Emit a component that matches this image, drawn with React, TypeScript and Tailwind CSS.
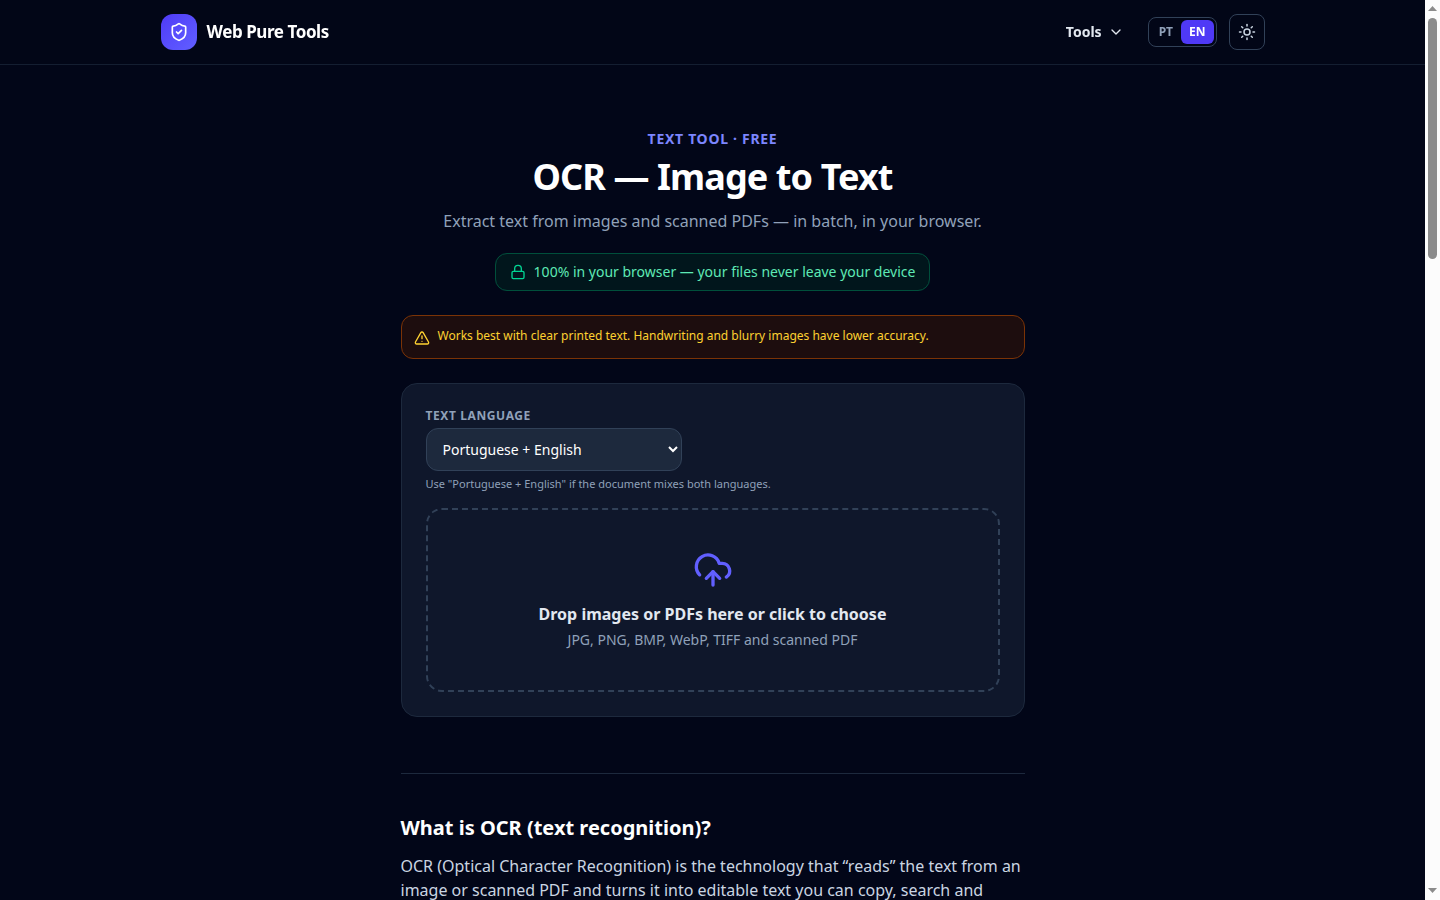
import { useState } from "react";
import { ChevronDown, CloudUpload, Lock, ShieldCheck, Sun, TriangleAlert } from "lucide-react";

const LANGUAGES = [
  { value: "por+eng", label: "Portuguese + English" },
  { value: "por", label: "Portuguese" },
  { value: "eng", label: "English" },
];

function Header() {
  const [locale, setLocale] = useState("en");

  const localeClass = (value: string) =>
    locale === value
      ? "rounded-md bg-indigo-600 px-2 py-1 text-white"
      : "rounded-md px-2 py-1 text-slate-400 hover:text-slate-200";

  return (
    <header className="sticky top-0 z-10 border-b border-slate-800/70 bg-slate-950/80 backdrop-blur">
      <div className="mx-auto flex h-16 max-w-6xl items-center justify-between px-6">
        <a href="#" className="flex items-center gap-2.5">
          <span className="flex size-9 items-center justify-center rounded-xl bg-linear-to-br from-indigo-600 to-indigo-500 text-white">
            <ShieldCheck className="size-5" />
          </span>
          <span className="text-[17px] font-bold tracking-tight text-white">Web Pure Tools</span>
        </a>

        <div className="flex items-center gap-3">
          <button className="flex items-center gap-1.5 px-3 py-2 text-sm font-bold text-slate-200">
            Tools
            <ChevronDown className="size-4" />
          </button>
          <div className="flex rounded-lg border border-slate-700 p-0.5 text-xs font-bold">
            <button className={localeClass("pt")} onClick={() => setLocale("pt")}>
              PT
            </button>
            <button className={localeClass("en")} onClick={() => setLocale("en")}>
              EN
            </button>
          </div>
          <button
            aria-label="Toggle theme"
            className="flex size-9 items-center justify-center rounded-lg border border-slate-700 text-slate-300"
          >
            <Sun className="size-[18px]" />
          </button>
        </div>
      </div>
    </header>
  );
}

function Uploader() {
  const [language, setLanguage] = useState("por+eng");

  return (
    <section className="mt-6 rounded-2xl border border-slate-800 bg-slate-900 p-6">
      <label
        htmlFor="ocr-language"
        className="mb-1 block text-xs font-bold tracking-wider text-slate-400 uppercase"
      >
        Text language
      </label>
      <select
        id="ocr-language"
        value={language}
        onChange={(e) => setLanguage(e.target.value)}
        className="block w-64 rounded-xl border border-slate-700 bg-slate-800 px-3 py-2.5 text-sm text-white"
      >
        {LANGUAGES.map((l) => (
          <option key={l.value} value={l.value}>
            {l.label}
          </option>
        ))}
      </select>
      <p className="mt-1 text-[11px] leading-[17px] text-slate-400">
        Use "Portuguese + English" if the document mixes both languages.
      </p>

      <button className="mt-4 flex w-full cursor-pointer flex-col items-center rounded-2xl border-2 border-dashed border-slate-700 p-10">
        <CloudUpload className="size-10 text-indigo-500" />
        <span className="mt-3 font-bold text-slate-200">Drop images or PDFs here or click to choose</span>
        <span className="mt-1 text-sm text-slate-400">JPG, PNG, BMP, WebP, TIFF and scanned PDF</span>
      </button>
    </section>
  );
}

// Always-visible scroll rail to the right of the page
function ScrollRail() {
  return (
    <div aria-hidden="true" className="flex w-[15px] shrink-0 flex-col items-center justify-between bg-[#fcfcfc] pt-1.5 pb-[7px]">
      <div className="flex flex-col items-center gap-[7px]">
        <svg className="h-[5px] w-[9px] fill-[#8b8b8b]" viewBox="0 0 9 5">
          <path d="M4.5 0L9 5H0z" />
        </svg>
        <div className="h-[241px] w-[9px] rounded-full bg-[#8b8b8b]" />
      </div>
      <svg className="h-[5px] w-[9px] fill-[#8b8b8b]" viewBox="0 0 9 5">
        <path d="M0 0h9L4.5 5z" />
      </svg>
    </div>
  );
}

export default function App() {
  return (
    <div className="flex h-screen bg-slate-950 font-['Noto_Sans',sans-serif]">
      <div className="min-w-0 flex-1 overflow-y-auto [scrollbar-width:none]">
        <Header />
        <main className="mx-auto max-w-2xl px-6 pt-16">
          <div className="text-center">
            <p className="text-sm font-bold tracking-wider text-indigo-400 uppercase">Text tool · Free</p>
            <h1 className="mt-2 text-4xl font-bold tracking-tight text-white">OCR — Image to Text</h1>
            <p className="mt-3 text-slate-400">
              Extract text from images and scanned PDFs — in batch, in your browser.
            </p>
            <div className="mt-5 inline-flex items-center gap-2 rounded-xl border border-emerald-900 bg-emerald-950/40 px-3.5 py-2 text-sm text-emerald-300">
              <Lock className="size-4 text-emerald-400" />
              100% in your browser — your files never leave your device
            </div>
          </div>

          <div className="mt-6 flex items-start gap-2 rounded-xl border border-amber-900 bg-amber-950/40 p-3 text-xs text-amber-300">
            <TriangleAlert className="mt-0.5 size-4 shrink-0" />
            <p>Works best with clear printed text. Handwriting and blurry images have lower accuracy.</p>
          </div>

          <Uploader />

          <article className="mt-14 border-t border-slate-800 pt-10">
            <h2 className="text-xl font-bold text-white">What is OCR (text recognition)?</h2>
            <p className="mt-3 text-slate-300">
              OCR (Optical Character Recognition) is the technology that “reads” the text from an image or scanned PDF
              and turns it into editable text you can copy, search and
            </p>
          </article>
        </main>
      </div>
      <ScrollRail />
    </div>
  );
}
